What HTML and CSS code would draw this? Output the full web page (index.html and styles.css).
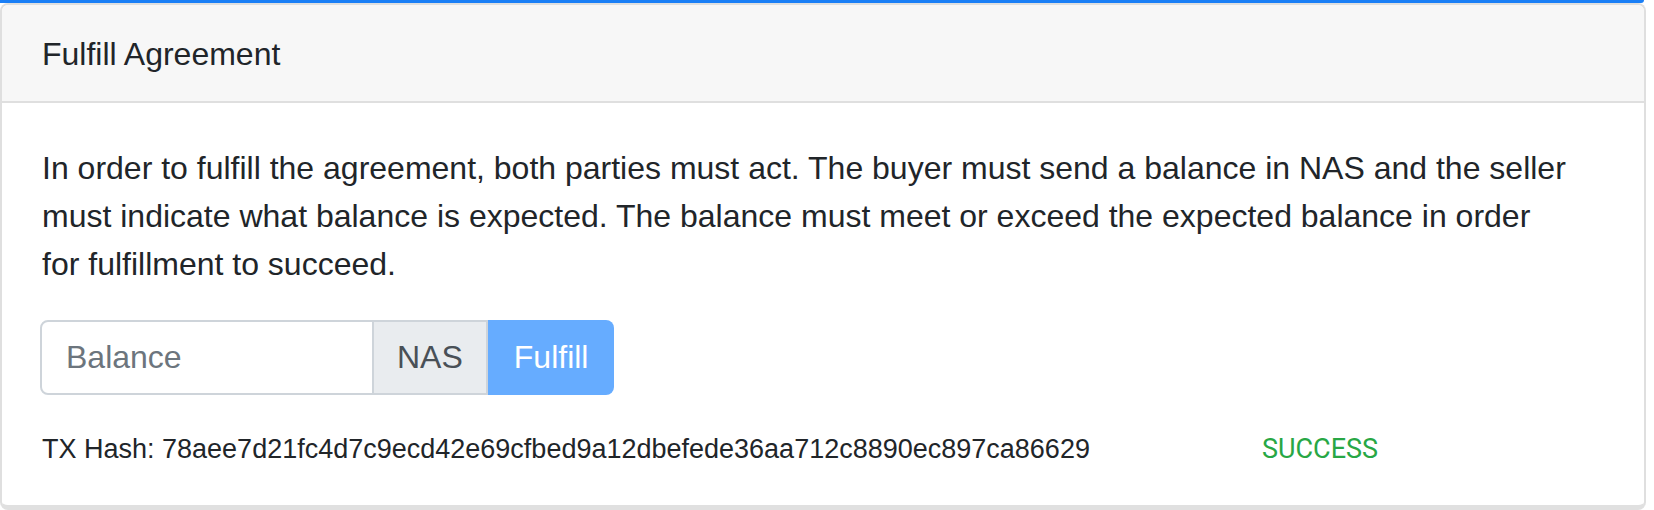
FILE: index.html
```html
<!DOCTYPE html>
<html>
<head>
<meta charset="utf-8">
<link rel="stylesheet" href="styles.css">
</head>
<body>
<div class="prev"></div>
<div class="card">
  <div class="card-header">Fulfill Agreement</div>
  <div class="card-body">
    <p class="intro">In order to fulfill the agreement, both parties must act. The buyer must send a balance in NAS and the seller must indicate what balance is expected. The balance must meet or exceed the expected balance in order<br>for fulfillment to succeed.</p>
    <div class="input-group">
      <input class="form-control" type="text" placeholder="Balance">
      <span class="addon">NAS</span>
      <button class="btn" disabled>Fulfill</button>
    </div>
    <div class="tx-row">
      <span class="tx">TX Hash: 78aee7d21fc4d7c9ecd42e69cfbed9a12dbefede36aa712c8890ec897ca86629</span>
      <span class="status">SUCCESS</span>
    </div>
  </div>
</div>
</body>
</html>
```
FILE: styles.css
```css
html, body {
  margin: 0;
  padding: 0;
  background: #ffffff;
}
body {
  font-family: "Liberation Sans", Arial, sans-serif;
  color: #212529;
  width: 1654px;
  height: 510px;
  overflow: hidden;
}
.prev {
  width: 1644px;
  height: 0;
  border-bottom: 3px solid #1a7ff6;
  border-bottom-right-radius: 8px;
}
.card {
  width: 1642px;
  border: 2px solid #dfdfdf;
  border-bottom: 5px solid #e0e0e0;
  border-radius: 8px;
  overflow: hidden;
}
.card-header {
  background: #f7f7f7;
  padding: 25px 40px 23px;
  font-size: 32px;
  line-height: 48px;
  border-bottom: 2px solid #dfdfdf;
}
.card-body {
  padding: 41px 40px 36px 38px;
}
.intro {
  margin: 0 0 32px 2px;
  font-size: 32px;
  line-height: 48px;
}
.input-group {
  display: flex;
  height: 75px;
}
.form-control {
  box-sizing: border-box;
  width: 334px;
  height: 75px;
  margin: 0;
  border: 2px solid #ced4da;
  border-radius: 8px 0 0 8px;
  padding: 0 24px;
  font-family: inherit;
  font-size: 32px;
  color: #495057;
  outline: none;
}
.form-control::placeholder {
  color: #6c757d;
}
.addon {
  box-sizing: border-box;
  display: flex;
  align-items: center;
  height: 75px;
  padding: 0 23px;
  margin-left: -2px;
  background: #e9ecef;
  border: 2px solid #ced4da;
  font-size: 32px;
  color: #495057;
}
.btn {
  box-sizing: border-box;
  height: 75px;
  padding: 0 24px;
  margin: 0;
  border: 2px solid transparent;
  border-radius: 0 8px 8px 0;
  background: #66acff;
  color: #ffffff;
  font-family: inherit;
  font-size: 32px;
}
.tx-row {
  display: grid;
  grid-template-columns: 1220px auto;
  margin-top: 34px;
  padding-left: 2px;
  font-size: 27px;
  line-height: 40px;
}
.status {
  font-family: Roboto, "Liberation Sans", sans-serif;
  color: #28a745;
}
```
